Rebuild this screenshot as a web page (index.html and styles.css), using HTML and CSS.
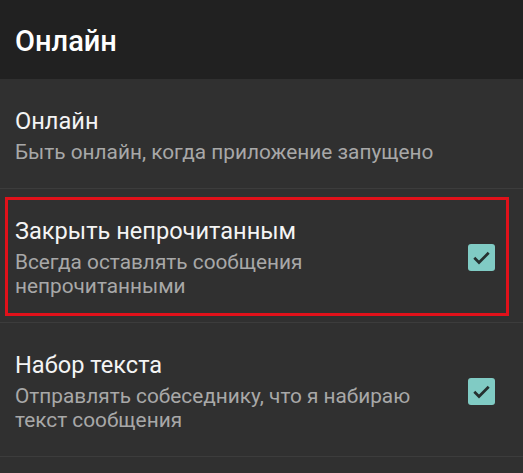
FILE: index.html
```html
<!DOCTYPE html>
<html lang="ru">
<head>
<meta charset="utf-8">
<link rel="stylesheet" href="styles.css">
</head>
<body>
<header class="appbar"><h1 class="appbar-title">Онлайн</h1></header>
<main class="list">
  <div class="item">
    <div class="text">
      <div class="title">Онлайн</div>
      <div class="summary">Быть онлайн, когда приложение запущено</div>
    </div>
  </div>
  <div class="item">
    <div class="text">
      <div class="title">Закрыть непрочитанным</div>
      <div class="summary">Всегда оставлять сообщения<br>непрочитанными</div>
    </div>
    <div class="check"><svg viewBox="0 0 27 27" width="27" height="27"><rect x="0" y="0" width="27" height="27" rx="3" fill="#80cbc4"/><path d="M6.3 13.8 L11 18.5 L20.7 8.8" fill="none" stroke="#25302f" stroke-width="2.7"/></svg></div>
    <div class="mark"></div>
  </div>
  <div class="item">
    <div class="text">
      <div class="title">Набор текста</div>
      <div class="summary">Отправлять собеседнику, что я набираю<br>текст сообщения</div>
    </div>
    <div class="check"><svg viewBox="0 0 27 27" width="27" height="27"><rect x="0" y="0" width="27" height="27" rx="3" fill="#80cbc4"/><path d="M6.3 13.8 L11 18.5 L20.7 8.8" fill="none" stroke="#25302f" stroke-width="2.7"/></svg></div>
  </div>
</main>
</body>
</html>
```
FILE: styles.css
```css
* { box-sizing: border-box; }
html, body { margin: 0; padding: 0; }
body {
  width: 523px;
  height: 473px;
  overflow: hidden;
  background: #303030;
  font-family: Roboto, "Noto Sans", sans-serif;
  color: #ffffff;
}
.appbar {
  height: 79px;
  background: #212121;
  display: flex;
  align-items: center;
  padding: 0 15px;
}
.appbar-title {
  margin: 0;
  font-size: 29px;
  line-height: 34px;
  font-weight: 500;
  color: #ffffff;
  position: relative;
  top: 1px;
}
.list { display: flex; flex-direction: column; }
.item {
  position: relative;
  display: flex;
  align-items: center;
  padding: 27px 28px 24px 15px;
  border-bottom: 1px solid #3c3c3c;
}
.text { flex: 1; }
.title {
  font-size: 23.6px;
  line-height: 30px;
  color: #f4f4f4;
}
.summary {
  margin-top: 4px;
  font-size: 20.8px;
  line-height: 24px;
  color: #a8a8a8;
}
.check { width: 27px; height: 27px; display: flex; }
.mark {
  position: absolute;
  left: 5px;
  right: 14px;
  top: 8px;
  bottom: 6px;
  border: 3px solid #e0111a;
}
```
